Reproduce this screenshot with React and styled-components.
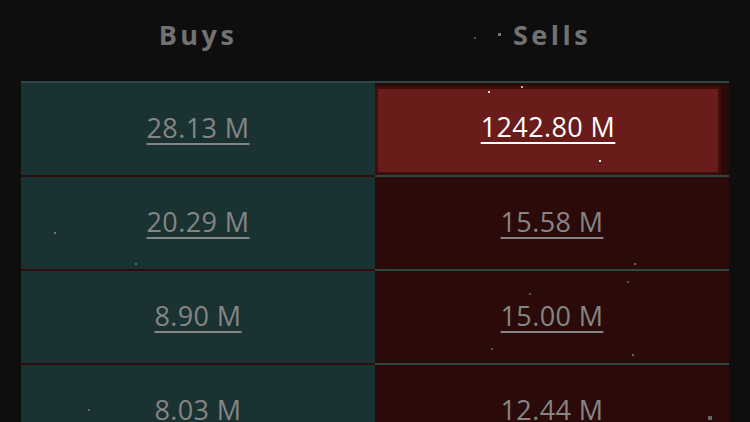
import React from 'react';
import styled, { createGlobalStyle } from 'styled-components';

const rows = [
    { buy: '28.13 M', sell: '1242.80 M', active: true },
    { buy: '20.29 M', sell: '15.58 M' },
    { buy: '8.90 M', sell: '15.00 M' },
    { buy: '8.03 M', sell: '12.44 M' },
];

// stray particles floating over the board
const dots = [
    { x: 474, y: 37, s: 2, c: '#555' },
    { x: 498, y: 33, s: 3, c: '#777' },
    { x: 488, y: 91, s: 2, c: '#ddd' },
    { x: 521, y: 86, s: 2, c: '#bbb' },
    { x: 599, y: 160, s: 2, c: '#eee' },
    { x: 54, y: 232, s: 2, c: '#777' },
    { x: 135, y: 263, s: 2, c: '#666' },
    { x: 634, y: 263, s: 2, c: '#666' },
    { x: 627, y: 281, s: 2, c: '#555' },
    { x: 529, y: 293, s: 2, c: '#555' },
    { x: 491, y: 348, s: 2, c: '#555' },
    { x: 632, y: 354, s: 2, c: '#666' },
    { x: 88, y: 409, s: 2, c: '#666' },
    { x: 708, y: 416, s: 4, c: '#666' },
];

const App = () => {
    return (
        <>
            <GlobalStyle />
            <Page>
                <HeaderRow>
                    <HeaderCell>Buys</HeaderCell>
                    <HeaderCell>Sells</HeaderCell>
                </HeaderRow>
                <Board>
                    {rows.map((row, index) => (
                        <Row key={index}>
                            <BuyCell>
                                <Amount href="#">{row.buy}</Amount>
                            </BuyCell>
                            <SellCell>
                                {row.active ? (
                                    <ActiveBox>
                                        <Amount href="#" active>{row.sell}</Amount>
                                    </ActiveBox>
                                ) : (
                                    <Amount href="#">{row.sell}</Amount>
                                )}
                            </SellCell>
                        </Row>
                    ))}
                </Board>
                {dots.map((d, index) => (
                    <Dot key={index} style={{ left: d.x, top: d.y, width: d.s, height: d.s, background: d.c }} />
                ))}
            </Page>
        </>
    );
};

export default App;

const GlobalStyle = createGlobalStyle`
    html, body {
        margin: 0;
        padding: 0;
        background: #0e0e0e;
        overflow: hidden;
    }
`;

const Page = styled.div`
    position: relative;
    width: 750px;
    height: 422px;
    padding: 0 21px;
    box-sizing: border-box;
    background: #0e0e0e;
    font-family: "Open Sans", "Liberation Sans", sans-serif;
    overflow: hidden;
`;

const HeaderRow = styled.div`
    display: grid;
    grid-template-columns: 1fr 1fr;
    height: 81px;
`;

const HeaderCell = styled.div`
    display: flex;
    align-items: center;
    justify-content: center;
    padding-bottom: 12px;
    color: #727272;
    font-size: 27px;
    font-weight: 700;
    letter-spacing: 3.5px;
`;

const Board = styled.div`
    border-top: 2px solid #2d4745;
`;

const Row = styled.div`
    display: grid;
    grid-template-columns: 354px 354px;
    height: 94px;
`;

const BuyCell = styled.div`
    display: flex;
    align-items: center;
    justify-content: center;
    padding-bottom: 3px;
    background: #1a3231;
    border-bottom: 2px solid #2d0e0d;
`;

const SellCell = styled.div`
    display: flex;
    align-items: center;
    justify-content: center;
    padding-bottom: 3px;
    background: #2a0b0a;
    border-bottom: 2px solid #2d4745;
`;

const ActiveBox = styled.div`
    flex: 1;
    align-self: stretch;
    display: flex;
    align-items: center;
    justify-content: center;
    margin: 6px 11px 0 3px;
    padding-bottom: 8px;
    background: #6a1c1a;
    box-shadow: 0 0 0 3px #3c0f0e;
`;

const Amount = styled.a`
    color: ${({ active }) => (active ? '#ffffff' : '#858585')};
    font-size: 27px;
    text-decoration: underline;
    text-decoration-thickness: 2px;
    text-underline-offset: 5px;
    letter-spacing: 0.4px;
`;

const Dot = styled.span`
    position: absolute;
    display: block;
`;
